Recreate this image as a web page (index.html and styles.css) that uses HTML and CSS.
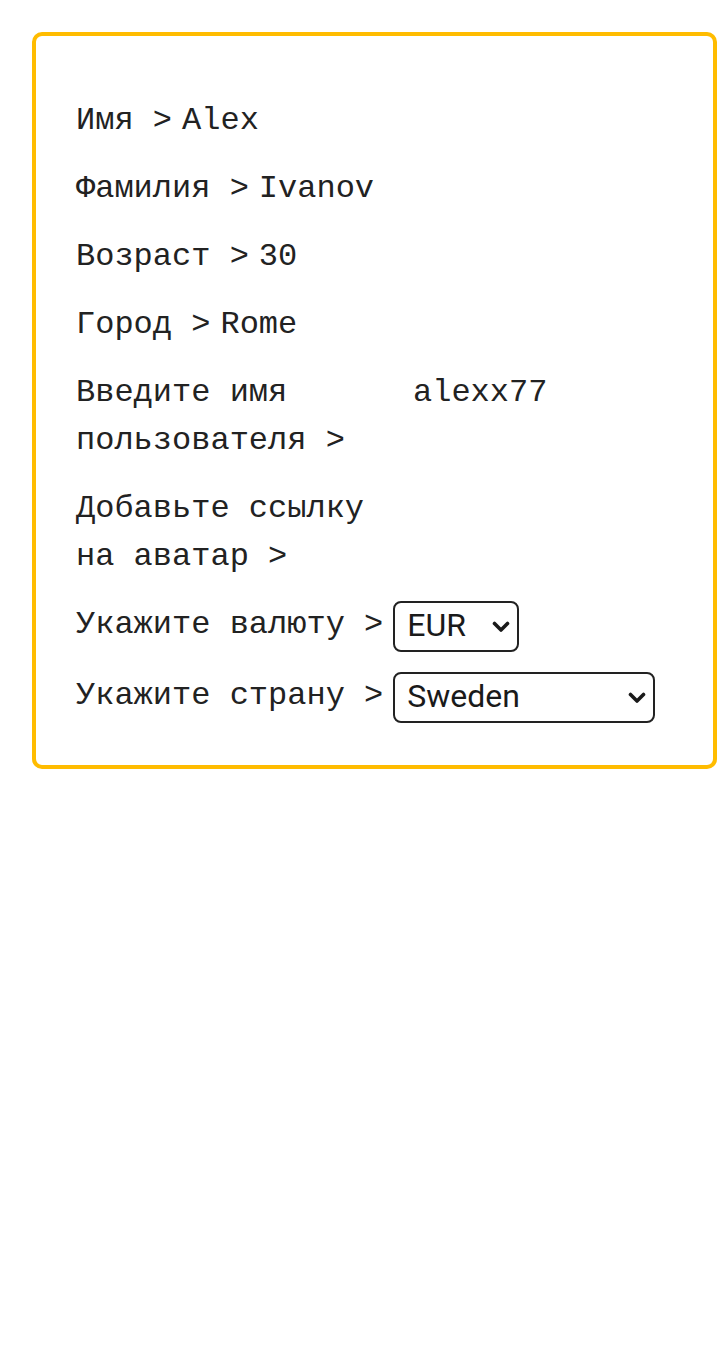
FILE: index.html
```html
<!DOCTYPE html>
<html lang="ru">
<head>
<meta charset="utf-8">
<title>Профиль</title>
<link rel="stylesheet" href="styles.css">
</head>
<body>
<div class="card">
  <div class="row"><span class="label">Имя &gt;</span><span class="value">Alex</span></div>
  <div class="row"><span class="label">Фамилия &gt;</span><span class="value">Ivanov</span></div>
  <div class="row"><span class="label">Возраст &gt;</span><span class="value">30</span></div>
  <div class="row"><span class="label">Город &gt;</span><span class="value">Rome</span></div>
  <div class="row"><span class="label">Введите имя пользователя &gt;</span><span class="value">alexx77</span></div>
  <div class="row"><span class="label">Добавьте ссылку на аватар &gt;</span><span class="value"></span></div>
  <div class="row">
    <span class="label">Укажите валюту &gt;</span>
    <span class="select-wrap">
      <select class="select select-currency">
        <option>EUR</option>
        <option>USD</option>
        <option>RUB</option>
      </select>
      <svg class="chevron" width="18" height="12" viewBox="0 0 18 12" aria-hidden="true"><polyline points="2.5,2.5 9,9 15.5,2.5" fill="none" stroke="#1a1a1a" stroke-width="3.6" stroke-linecap="round" stroke-linejoin="round"/></svg>
    </span>
  </div>
  <div class="row">
    <span class="label">Укажите страну &gt;</span>
    <span class="select-wrap">
      <select class="select select-country">
        <option>Sweden</option>
        <option>Italy</option>
        <option>Russia</option>
      </select>
      <svg class="chevron" width="18" height="12" viewBox="0 0 18 12" aria-hidden="true"><polyline points="2.5,2.5 9,9 15.5,2.5" fill="none" stroke="#1a1a1a" stroke-width="3.6" stroke-linecap="round" stroke-linejoin="round"/></svg>
    </span>
  </div>
</div>
</body>
</html>
```

FILE: styles.css
```css
html, body {
  background: #ffffff;
}
body {
  margin: 0;
  font-family: "Liberation Mono", "Courier New", monospace;
  font-size: 32px;
  line-height: 48px;
  color: #222222;
}
.card {
  box-sizing: border-box;
  margin: 32px 0 0 32px;
  width: 685px;
  border: 4px solid #ffbc00;
  border-radius: 10px;
  padding: 61px 40px 42px 40px;
  display: flex;
  flex-direction: column;
  gap: 20px;
}
.row {
  display: flex;
  align-items: flex-start;
  gap: 10px;
}
.label {
  max-width: 327px;
}
.value {
  white-space: nowrap;
}
.select-wrap {
  position: relative;
  display: inline-flex;
}
.select {
  -webkit-appearance: none;
  appearance: none;
  box-sizing: border-box;
  height: 51px;
  margin: 0;
  border: 2px solid #222222;
  border-radius: 8px;
  background: #ffffff;
  color: #1a1a1a;
  font-family: Roboto, "Liberation Sans", Arial, sans-serif;
  font-size: 32px;
  line-height: normal;
  padding: 0 36px 3px 12px;
}
.select-currency {
  width: 126px;
}
.select-country {
  width: 262px;
}
.chevron {
  position: absolute;
  right: 9px;
  top: 50%;
  margin-top: -6px;
  pointer-events: none;
}
```
